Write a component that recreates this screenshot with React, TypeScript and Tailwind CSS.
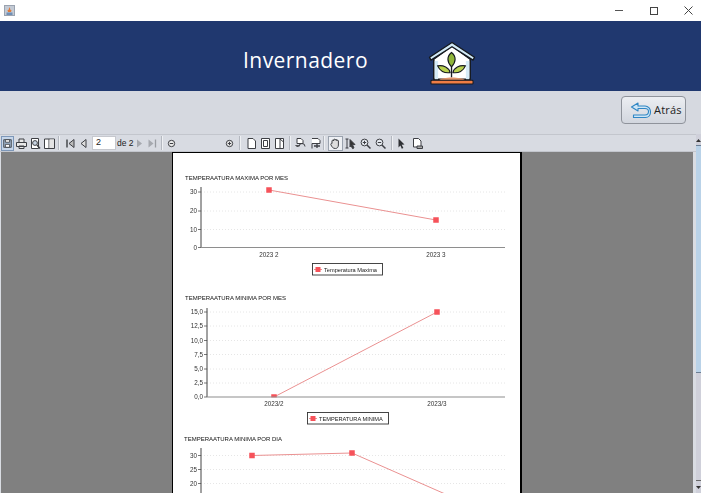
import type { ReactNode } from "react"

type ChartProps = {
  top: number
  height: number
  title: string
  titleX: number
  titleY: number
  axisX: number
  axisTop: number
  axisBottom?: number
  ticks: { label: string; y: number }[]
  points: number[][]
  labels?: { text: string; x: number }[]
  labelY?: number
  legend?: { text: string; x: number; y: number; w: number }
}

const font = "Liberation Sans, Arial, sans-serif"

function Chart({ top, height, title, titleX, titleY, axisX, axisTop, axisBottom, ticks, points, labels, labelY, legend }: ChartProps) {
  return (
    <svg width="348" height={height} viewBox={`173 ${top} 348 ${height}`} className="block blur-[0.25px]" fontFamily={font}>
      <text x={titleX} y={titleY} fontSize="6" fill="#111">{title}</text>
      {ticks.map((t) => (
        <g key={t.label}>
          {t.label !== ticks[ticks.length - 1].label || !axisBottom ? (
            <line x1={axisX} x2="505" y1={t.y} y2={t.y} stroke="#e0e0e0" strokeWidth="0.8" strokeDasharray="1 2" />
          ) : null}
          <line x1={axisX - 3} x2={axisX} y1={t.y} y2={t.y} stroke="#555" strokeWidth="0.8" />
          <text x={axisX - 4} y={t.y + 2.2} fontSize="6.3" textAnchor="end" fill="#333">{t.label}</text>
        </g>
      ))}
      <polyline points={points.map((p) => p.join(",")).join(" ")} fill="none" stroke="#ea9191" strokeWidth="1" />
      {points.map((p) => (
        <rect key={p[0]} x={p[0] - 2.75} y={p[1] - 2.75} width="5.5" height="5.5" fill="#f6525a" />
      ))}
      <line x1={axisX} x2={axisX} y1={axisTop} y2={axisBottom ?? top + height} stroke="#444" strokeWidth="1" />
      {axisBottom ? (
        <>
          <rect x={axisX} y={axisBottom + 0.4} width={505 - axisX} height={top + height - axisBottom} fill="#fff" />
          <line x1={axisX} x2="505" y1={axisBottom} y2={axisBottom} stroke="#8e8e8e" strokeWidth="1.2" />
        </>
      ) : null}
      {labels?.map((l) => (
        <text key={l.text} x={l.x} y={labelY} fontSize="6.3" textAnchor="middle" fill="#333">{l.text}</text>
      ))}
      {legend ? (
        <g>
          <rect x={legend.x + 0.5} y={legend.y + 0.5} width={legend.w} height="11.5" fill="#fff" stroke="#333" strokeWidth="0.9" />
          <line x1={legend.x + 2} x2={legend.x + 10} y1={legend.y + 6.5} y2={legend.y + 6.5} stroke="#ea9191" />
          <rect x={legend.x + 3.5} y={legend.y + 4} width="5" height="5" fill="#f6525a" />
          <text x={legend.x + 12} y={legend.y + 8.6} fontSize="5.65" fill="#222">{legend.text}</text>
        </g>
      ) : null}
    </svg>
  )
}

function Tool({ w, children, className = "" }: { w: string; children?: ReactNode; className?: string }) {
  return <div className={`${w} h-[15px] shrink-0 flex items-center justify-center ${className}`}>{children}</div>
}

function Sep() {
  return <div className="w-[2px] h-[14px] shrink-0 border-l border-[#b4b8c0] bg-[#eef0f3]" />
}

function Ico({ children }: { children: ReactNode }) {
  return (
    <svg width="13" height="13" viewBox="0 0 13 13" fill="none" stroke="#3d3f44" strokeWidth="1" className="blur-[0.25px]">
      {children}
    </svg>
  )
}

const pageDoc = <path d="M3 1.5h5l2.5 2.5v7.5H3z" fill="#fff" />

function Toolbar() {
  return (
    <div className="h-[18px] flex items-center bg-[#d8dbe2] border-y border-[#c3c6cd] pl-px text-[#222]">
      <Tool w="w-[13px]" className="bg-[#c6d6ea] border border-[#7d97b8]">
        <Ico><path d="M2 2h9v9H2z" fill="#9fb4cc" /><path d="M4 2h5v3H4zM4 7.5h5V11H4z" fill="#fff" /></Ico>
      </Tool>
      <Tool w="w-[14px]"><Ico><path d="M4 5V2h5v3M1.5 5.5h10v4h-10zM4 9h5v2.5H4z" fill="#e8e8e8" /></Ico></Tool>
      <Tool w="w-[14px]"><Ico><path d="M2.5 1.5h7v10h-7z" fill="#fff" /><circle cx="6" cy="6" r="2.4" fill="#c8d4e2" /><path d="M8 8l3 3.5" strokeWidth="1.5" /></Ico></Tool>
      <Tool w="w-[15px]"><Ico><path d="M1.5 2h10v9.5h-10zM6 2v9.5" fill="#fff" /><path d="M6.500 2.500h4.500v8.500H6.500z" fill="#e4e4e4" stroke="none" /></Ico></Tool>
      <div className="w-[1px] shrink-0" />
      <Sep />
      <div className="w-[3px] shrink-0" />
      <Tool w="w-[14px]"><Ico><path d="M3 2.500v8" strokeWidth="1.4" /><path d="M10 2.500L5 6.500l5 4z" fill="#bbb" /></Ico></Tool>
      <Tool w="w-[13px]"><Ico><path d="M9 2.500L4 6.500l5 4z" fill="#ddd" /></Ico></Tool>
      <div className="w-[2px] shrink-0" />
      <div className="w-[24px] h-[14px] bg-white border border-[#c6c8ce] flex items-center pl-[3px] shrink-0 text-[9px] [font-family:'Liberation_Sans',Arial,sans-serif]">2</div>
      <div className="w-[17px] shrink-0 pl-[1px] text-[8.500px] whitespace-nowrap leading-none [font-family:'Liberation_Sans',Arial,sans-serif]">de 2</div>
      <Tool w="w-[13px]"><svg width="13" height="13" viewBox="0 0 13 13"><path d="M4 2.500l5 4-5 4z" fill="#a6a9af" /></svg></Tool>
      <Tool w="w-[12px]"><svg width="12" height="13" viewBox="0 0 12 13"><path d="M2.500 2.500l5 4-5 4z" fill="#a6a9af" /><path d="M9.500 2.500v8" stroke="#9a9da3" strokeWidth="1.3" /></svg></Tool>
      <div className="w-[3px] shrink-0" />
      <Sep />
      <div className="w-[2px] shrink-0" />
      <Tool w="w-[13px]"><Ico><circle cx="6.500" cy="6.500" r="3.200" fill="#e9e9e9" /><path d="M4.800 6.500h3.400" /></Ico></Tool>
      <div className="w-[45px] shrink-0" />
      <Tool w="w-[13px]"><Ico><circle cx="6.500" cy="6.500" r="3.200" fill="#e9e9e9" /><path d="M4.800 6.500h3.400M6.500 4.800v3.400" /></Ico></Tool>
      <div className="w-[3px] shrink-0" />
      <Sep />
      <div className="w-[3px] shrink-0" />
      <Tool w="w-[14px]"><Ico>{pageDoc}</Ico></Tool>
      <Tool w="w-[14px]"><Ico><path d="M2.500 1.500h8v10h-8z" fill="#fff" /><path d="M4.500 3.500h4v6h-4z" /></Ico></Tool>
      <Tool w="w-[15px]"><Ico><path d="M2.500 1.500h8v10h-8z" fill="#fff" /><path d="M7 2v9M7 2l3.500 3" /></Ico></Tool>
      <div className="w-[2px] shrink-0" />
      <Sep />
      <div className="w-[2px] shrink-0" />
      <Tool w="w-[15px]"><Ico><path d="M3 1.500h4l2 2v3H3z" fill="#fff" /><path d="M5 9.500a3 3 0 0 1 6 0" /><path d="M1.500 8l2 2 2-2" fill="#555" /></Ico></Tool>
      <Tool w="w-[14px]"><Ico><path d="M3 1.500h6l2 2v3H3v5" fill="#fff" /><path d="M5 9h6M8 7v4" strokeWidth="1.300" /></Ico></Tool>
      <div className="w-[1px] shrink-0" />
      <Sep />
      <div className="w-[3px] shrink-0" />
      <Tool w="w-[15px]" className="bg-[#eef0f4] border border-[#9aa2ae]">
        <Ico><path d="M3 6.500V4a.8.8 0 0 1 1.600 0V3a.8.8 0 0 1 1.600 0v.2a.8.8 0 0 1 1.600 0V4a.8.8 0 0 1 1.600 0v4c0 2-1 3.500-3 3.500-2.500 0-3.500-1.500-4.600-4-.3-.8.8-1.400 1.200-1z" fill="#ddd" /></Ico>
      </Tool>
      <Tool w="w-[15px]"><Ico><path d="M1.500 2h3M3 2v9M1.500 11h3" /><path d="M6 2.500l5 5-2.500.2L10 11l-1.500.6L7 8.500l-1 1.500z" fill="#333" /></Ico></Tool>
      <Tool w="w-[15px]"><Ico><circle cx="5.500" cy="5.500" r="3.400" fill="#e4e8ee" /><path d="M8 8l3.500 3.500" strokeWidth="1.500" /><path d="M3.800 5.500h3.400M5.500 3.800v3.400" /></Ico></Tool>
      <Tool w="w-[15px]"><Ico><circle cx="5.500" cy="5.500" r="3.400" fill="#e4e8ee" /><path d="M8 8l3.500 3.500" strokeWidth="1.500" /><path d="M3.800 5.500h3.400" /></Ico></Tool>
      <div className="w-[3px] shrink-0" />
      <Sep />
      <div className="w-[1px] shrink-0" />
      <Tool w="w-[15px]"><svg width="13" height="13" viewBox="0 0 13 13"><path d="M3.500 1.500l6 6-2.800.2L8.400 11l-1.600.7-1.400-3.200-1.900 1.900z" fill="#2e3034" /></svg></Tool>
      <Tool w="w-[17px]"><Ico><path d="M2.500 1.500h5l2.500 2.500v6h-7.500z" fill="#fff" /><path d="M6 9h5.500v2.500H6z" fill="#aaa" /></Ico></Tool>
    </div>
  )
}

function Greenhouse() {
  return (
    <svg width="48" height="45" viewBox="0 0 50 47" className="blur-[0.25px]">
      <path d="M6 19L25 5l19 14v21H6z" fill="#fff" stroke="#15191f" strokeWidth="1.600" strokeLinejoin="round" />
      <path d="M7 21h3.500v19H7zM39.500 21H43v19h-3.500z" fill="#d6ecf8" />
      <path d="M1.500 17L25 1.500 48.500 17l-1.500 3L25 6 3 20z" fill="#d2eaf7" stroke="#15191f" strokeWidth="1.400" strokeLinejoin="round" />
      <path d="M24.500 38V20" stroke="#15191f" strokeWidth="1.400" />
      <path d="M24.500 12c-5 4-5 10 0 15 5-5 5-11 0-15z" fill="#8fb53a" stroke="#15191f" strokeWidth="1.200" />
      <path d="M23 33c-1-5-7-8-13-7 2 5 7 8 13 7zM26 33c1-5 7-8 13-7-2 5-7 8-13 7z" fill="#b9d14e" stroke="#15191f" strokeWidth="1.200" />
      <path d="M11 41c4-4 24-4 28 0z" fill="#e0936b" />
      <rect x="3" y="41" width="44" height="4" rx="1" fill="#ef7d45" stroke="#15191f" strokeWidth="1.100" />
    </svg>
  )
}

export default function App() {
  return (
    <div className="w-[701px] h-[493px] overflow-hidden flex flex-col bg-white">
      {/* title bar */}
      <div className="h-[21px] shrink-0 flex items-center bg-white">
        <div className="ml-[4px] w-[11px] h-[11px] bg-[#c3cad4] border border-[#9aa3b0] flex items-center justify-center">
          <svg width="7" height="8" viewBox="0 0 7 8"><path d="M3.500 0l1 3h1L5 5H2L1.500 3h1z" fill="#e07a3a" /><path d="M0.500 5.500h6V8h-6z" fill="#6f8fb5" /></svg>
        </div>
        <svg width="8" height="3" viewBox="0 0 8 3" className="ml-[600px]"><path d="M0 1.500h8" stroke="#555" /></svg>
        <div className="ml-[27px] w-[8px] h-[8px] border border-[#444]" />
        <svg width="9" height="9" viewBox="0 0 9 9" className="ml-[26px]"><path d="M0.500 0.500l8 8M8.500 0.500l-8 8" stroke="#444" /></svg>
      </div>

      {/* header */}
      <div className="h-[70px] shrink-0 bg-[#20386f] flex items-start">
        <div className="ml-[243px] mt-[29px] w-[185px] text-white text-[21px] leading-none tracking-[0.45px] [font-family:'Open_Sans','DejaVu_Sans',sans-serif]">
          Invernadero
        </div>
        <div className="mt-[20px]"><Greenhouse /></div>
      </div>

      {/* back button row */}
      <div className="h-[43px] shrink-0 bg-[#d6d9e0] flex justify-end pr-[15px] pt-[5px]">
        <button className="w-[65px] h-[28px] rounded-[4px] border border-[#8f939b] bg-gradient-to-b from-[#eceef2] to-[#d2d6de] flex items-center pl-[8px] gap-[3px] text-[11px] text-[#222] tracking-[0.2px] [font-family:'Open_Sans',sans-serif]">
          <svg width="21" height="17" viewBox="0 0 21 17" fill="none" className="shrink-0">
            <path d="M8 1L1.500 5 8 9V6.500h7c2 0 3.500 1 3.500 3s-1.500 3.500-3.500 3.500H3.500V15.500H15.500c3 0 5-2.500 5-5.500 0-3.500-2.500-6-5.500-6H8z" fill="#cfe6f6" stroke="#2f86c4" strokeWidth="1.100" strokeLinejoin="round" />
          </svg>
          Atrás
        </button>
      </div>

      {/* report viewer */}
      <div className="flex-1 min-h-0 flex bg-[#d6d9e0]">
        <div className="w-[696px] flex flex-col min-h-0">
          <Toolbar />
          <div className="flex-1 min-h-0 overflow-hidden bg-[#808080] border-l-[1px] border-r-[3px] border-[#d9dce2] pl-[171px]">
            <div className="w-[350px] bg-white border-x-[1px] border-t-[1px] border-black border-r-[2px]">
              <Chart
                top={153} height={134}
                title="TEMPERAATURA MAXIMA POR MES" titleX={185} titleY={179.5}
                axisX={201} axisTop={187} axisBottom={247.5}
                ticks={[{ label: "30", y: 192 }, { label: "20", y: 211 }, { label: "10", y: 229.5 }, { label: "0", y: 247.5 }]}
                points={[[269, 190], [436, 220]]}
                labels={[{ text: "2023 2", x: 269 }, { text: "2023 3", x: 436 }]} labelY={256.5}
                legend={{ text: "Temperatura Maxima", x: 312, y: 263, w: 70 }}
              />
              <Chart
                top={287} height={141}
                title="TEMPERAATURA MINIMA POR MES" titleX={185} titleY={299.5}
                axisX={207} axisTop={308} axisBottom={397}
                ticks={[
                  { label: "15,0", y: 312 }, { label: "12,5", y: 326 }, { label: "10,0", y: 340.5 }, { label: "7,5", y: 354.5 },
                  { label: "5,0", y: 369 }, { label: "2,5", y: 383 }, { label: "0,0", y: 397 },
                ]}
                points={[[274, 397], [437, 312]]}
                labels={[{ text: "2023/2", x: 274 }, { text: "2023/3", x: 437 }]} labelY={406}
                legend={{ text: "TEMPERATURA MINIMA", x: 307, y: 412, w: 81 }}
              />
              <Chart
                top={428} height={65}
                title="TEMPERAATURA MINIMA POR DIA" titleX={184} titleY={440.5}
                axisX={201} axisTop={448}
                ticks={[{ label: "30", y: 455.5 }, { label: "25", y: 469.5 }, { label: "20", y: 483.5 }]}
                points={[[252, 455.5], [352, 453], [452, 497]]}
              />
            </div>
          </div>
        </div>

        {/* scrollbar */}
        <div className="w-[5px] flex flex-col bg-[#cfd0da]">
          <div className="h-[10px] mt-[1px] flex items-center justify-center text-[#222]">
            <svg width="5" height="5" viewBox="0 0 5 5"><path d="M2.500 1L5 4H0z" fill="#333" /></svg>
          </div>
          <div className="h-[228px] bg-[#b9d2e8] border-t border-b border-[#6c7f94]" />
          <div className="flex-1" />
          <div className="h-[13px] flex items-center justify-center border-t border-[#666]">
            <svg width="5" height="5" viewBox="0 0 5 5"><path d="M0 1h5L2.500 4z" fill="#333" /></svg>
          </div>
        </div>
      </div>
    </div>
  )
}
